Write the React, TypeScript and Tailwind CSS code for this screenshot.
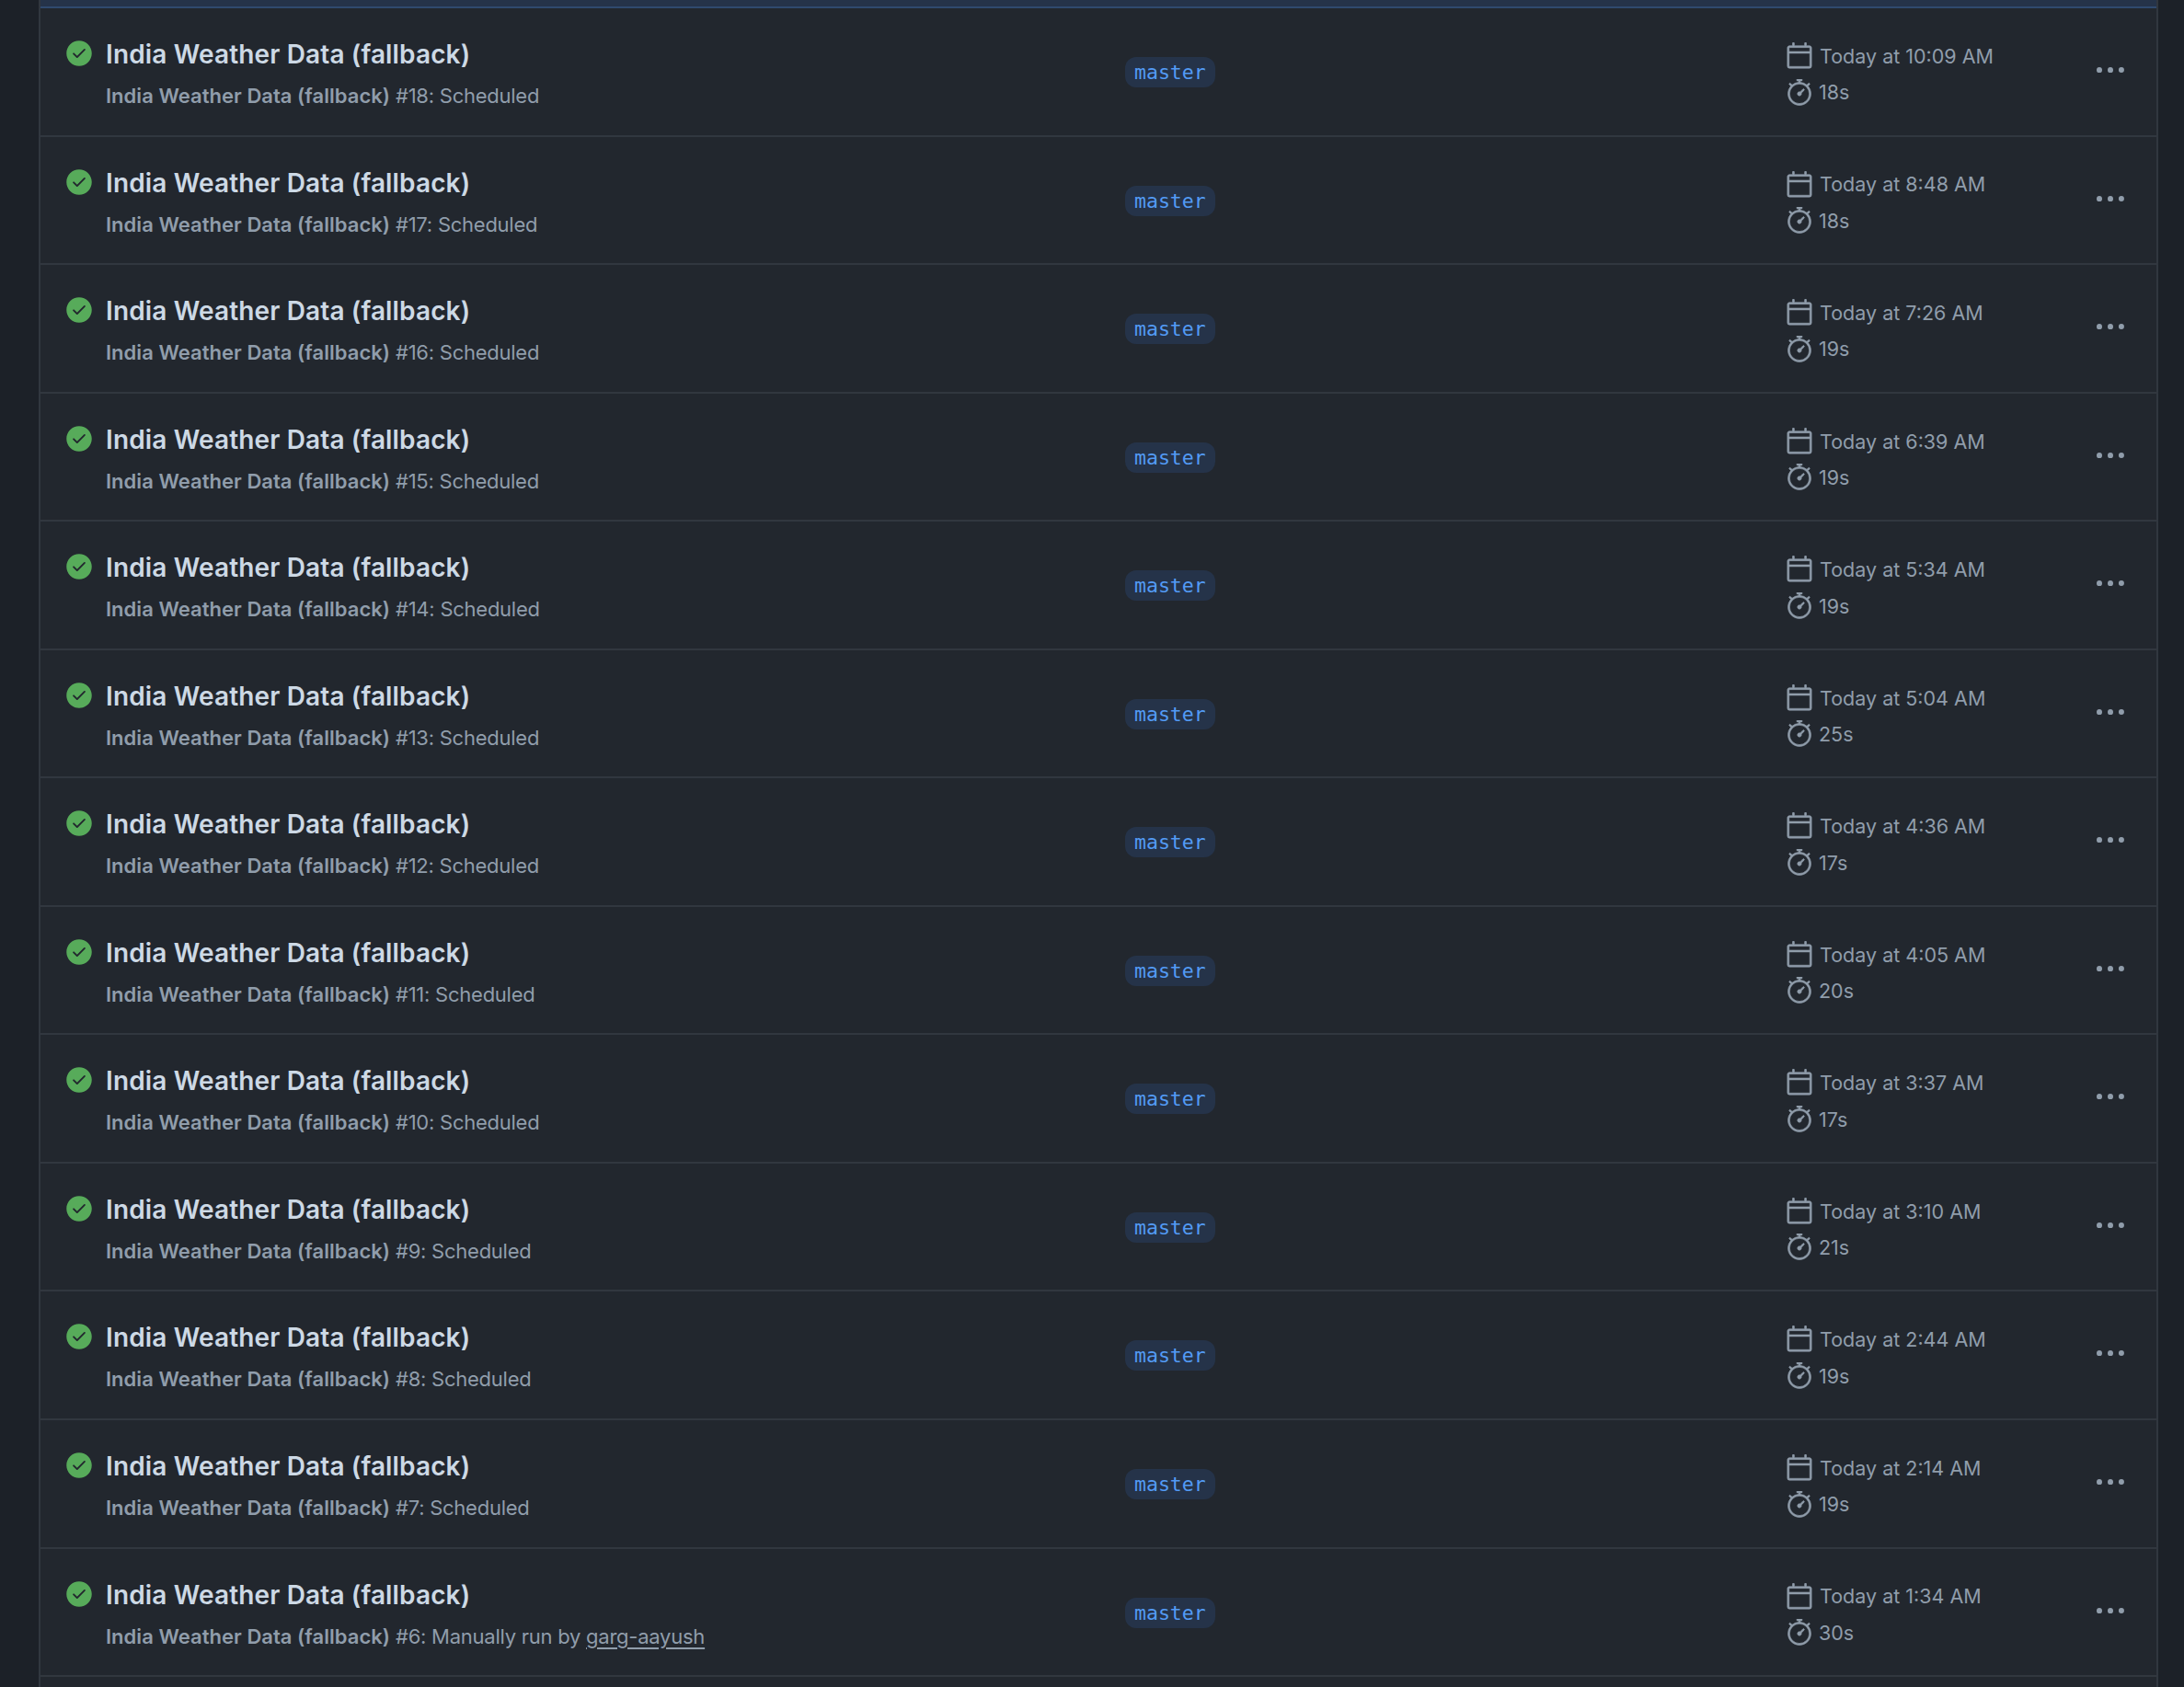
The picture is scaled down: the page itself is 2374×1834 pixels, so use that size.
import React from "react";
import { GoCalendar, GoCheckCircleFill, GoKebabHorizontal, GoStopwatch } from "react-icons/go";

type Run = {
  num: number;
  time: string;
  took: string;
  actor?: string;
};

const RUNS: Run[] = [
  { num: 18, time: "Today at 10:09 AM", took: "18s" },
  { num: 17, time: "Today at 8:48 AM", took: "18s" },
  { num: 16, time: "Today at 7:26 AM", took: "19s" },
  { num: 15, time: "Today at 6:39 AM", took: "19s" },
  { num: 14, time: "Today at 5:34 AM", took: "19s" },
  { num: 13, time: "Today at 5:04 AM", took: "25s" },
  { num: 12, time: "Today at 4:36 AM", took: "17s" },
  { num: 11, time: "Today at 4:05 AM", took: "20s" },
  { num: 10, time: "Today at 3:37 AM", took: "17s" },
  { num: 9, time: "Today at 3:10 AM", took: "21s" },
  { num: 8, time: "Today at 2:44 AM", took: "19s" },
  { num: 7, time: "Today at 2:14 AM", took: "19s" },
  { num: 6, time: "Today at 1:34 AM", took: "30s", actor: "garg-aayush" },
];

const RunRow: React.FC<{ run: Run }> = ({ run }) => (
  <div className="flex h-[139.55px] border-b-2 border-[#31373f]">
    <div className="flex w-[1179px] shrink-0 pl-[27px] pt-[34px]">
      <GoCheckCircleFill className="h-[30px] w-[30px] shrink-0 text-[#57ab5a]" />
      <div className="ml-[14px]">
        <div className="text-[28px] font-semibold leading-[32px] tracking-[0.14px] text-[#cdd9e5]">
          India Weather Data (fallback)
        </div>
        <div className="mt-[13px] text-[22px] leading-[32px] tracking-[-0.25px] text-[#909dab]">
          <span className="font-semibold tracking-[0.03px]">India Weather Data (fallback)</span>{" "}
          #{run.num}:{" "}
          {run.actor ? (
            <>
              Manually run by <span className="underline underline-offset-4">{run.actor}</span>
            </>
          ) : (
            "Scheduled"
          )}
        </div>
      </div>
    </div>

    <div className="w-[718px] shrink-0 pt-[53px]">
      <span className="inline-block h-[33px] rounded-[12px] bg-[#253349] px-[10px] font-['DejaVu_Sans_Mono',monospace] text-[21.5px] leading-[33px] text-[#539bf5]">
        master
      </span>
    </div>

    <div className="w-[335px] shrink-0 pt-[32px] text-[21.5px] text-[#909dab]">
      <div className="flex h-[40px] items-center gap-[7px]">
        <GoCalendar className="h-[30px] w-[30px] shrink-0 stroke-current stroke-[0.5px]" />
        <span>{run.time}</span>
      </div>
      <div className="flex h-[39px] items-center gap-[6px]">
        <GoStopwatch className="h-[30px] w-[30px] shrink-0 stroke-current stroke-[0.5px]" />
        <span>{run.took}</span>
      </div>
    </div>

    <div className="pt-[49px] text-[#909dab]">
      <GoKebabHorizontal className="h-[36px] w-[36px]" />
    </div>
  </div>
);

export default function App() {
  return (
    <div className="h-[1834px] overflow-hidden bg-[#1c2128] px-[29px] font-['Inter',sans-serif]">
      <div className="ml-[13px] h-full w-[2304px] border-x-2 border-[#31373f] bg-[#22272e]">
        <div className="h-[9px] border-b-2 border-[#304a6e] bg-[#253349]" />
        {RUNS.map((run) => (
          <RunRow key={run.num} run={run} />
        ))}
      </div>
    </div>
  );
}
